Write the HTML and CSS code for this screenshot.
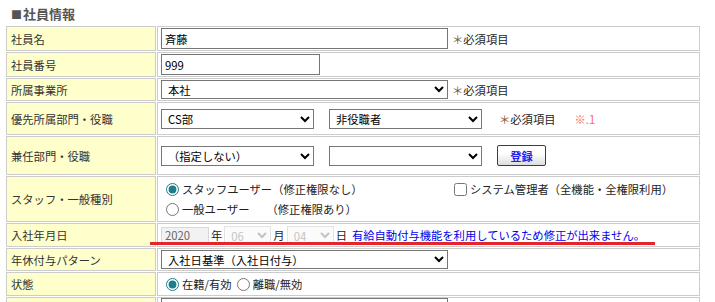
FILE: index.html
```html
<!DOCTYPE html>
<html lang="ja">
<head>
    <meta charset="UTF-8">
    <meta name="viewport" content="width=device-width, initial-scale=1.0">
    <title>社員情報</title>
    <link rel="stylesheet" href="styles.css">
</head>
<body>
    <h2 class="sec-title"><span class="mark">■</span>社員情報</h2>

    <table class="form-table">
        <colgroup>
            <col class="col-label">
            <col class="col-value">
        </colgroup>
        <tr class="r25">
            <th>社員名</th>
            <td>
                <div class="field">
                    <input type="text" class="txt w-long" value="斉藤">
                    <span class="req"><span class="star">＊</span>必須項目</span>
                </div>
            </td>
        </tr>
        <tr class="r25">
            <th>社員番号</th>
            <td>
                <div class="field">
                    <input type="text" class="txt w-mid" value="999">
                </div>
            </td>
        </tr>
        <tr class="r23">
            <th>所属事業所</th>
            <td>
                <div class="field">
                    <select class="sel w-long"><option>本社</option></select>
                    <span class="req"><span class="star">＊</span>必須項目</span>
                </div>
            </td>
        </tr>
        <tr class="r33">
            <th>優先所属部門・役職</th>
            <td>
                <div class="field">
                    <select class="sel sel-tall w-half"><option>CS部</option></select>
                    <select class="sel sel-tall w-half gap-l"><option>非役職者</option></select>
                    <span class="req req-far"><span class="star">＊</span>必須項目</span>
                    <span class="note">※.1</span>
                </div>
            </td>
        </tr>
        <tr class="r39">
            <th>兼任部門・役職</th>
            <td>
                <div class="field">
                    <select class="sel sel-tall w-half"><option>（指定しない）</option></select>
                    <select class="sel sel-tall w-half gap-l"><option></option></select>
                    <button class="btn-reg">登録</button>
                </div>
            </td>
        </tr>
        <tr class="r46">
            <th>スタッフ・一般種別</th>
            <td>
                <div class="opt-line">
                    <label class="opt-first"><input type="radio" name="kind" checked>スタッフユーザー（修正権限なし）</label>
                    <label><input type="checkbox">システム管理者（全機能・全権限利用）</label>
                </div>
                <div class="opt-line">
                    <label><input type="radio" name="kind">一般ユーザー　　（修正権限あり）</label>
                </div>
            </td>
        </tr>
        <tr class="r24">
            <th>入社年月日</th>
            <td>
                <div class="field">
                    <input type="text" class="txt date-y" value="2020" disabled>
                    <span class="unit">年</span>
                    <select class="sel date-md" disabled><option>06</option></select>
                    <span class="unit">月</span>
                    <select class="sel date-md" disabled><option>04</option></select>
                    <span class="unit">日</span>
                    <span class="info">有給自動付与機能を利用しているため修正が出来ません。</span>
                </div>
            </td>
        </tr>
        <tr class="r23">
            <th>年休付与パターン</th>
            <td>
                <div class="field">
                    <select class="sel w-long"><option>入社日基準（入社日付与）</option></select>
                </div>
            </td>
        </tr>
        <tr class="r24">
            <th>状態</th>
            <td>
                <div class="opt-line">
                    <label><input type="radio" name="state" checked>在籍/有効</label>
                    <label><input type="radio" name="state">離職/無効</label>
                </div>
            </td>
        </tr>
        <tr class="r25">
            <th></th>
            <td>
                <div class="field field-top">
                    <select class="sel w-long"><option></option></select>
                </div>
            </td>
        </tr>
    </table>

    <div class="mark-line"></div>
</body>
</html>
```

FILE: styles.css
```css
html, body {
    overflow: hidden;
}
body {
    margin: 0;
    position: relative;
    font-family: "Noto Sans CJK JP", sans-serif;
    font-size: 11.3px;
    color: #222;
    background-color: #fff;
}
.sec-title {
    margin: 0;
    padding-left: 11px;
    height: 25px;
    line-height: 27px;
    font-size: 13px;
    font-weight: bold;
    color: #555;
}
.sec-title .mark {
    font-size: 11px;
    margin-right: 1px;
}
.form-table {
    margin-left: 5px;
    width: 696px;
    table-layout: fixed;
    border-collapse: separate;
    border-spacing: 1px;
}
.col-label {
    width: 150px;
}
.form-table th,
.form-table td {
    box-sizing: border-box;
    border: 1px solid #ccc;
    vertical-align: middle;
    padding: 0 3px;
}
.form-table th {
    padding-left: 4px;
    text-align: left;
    font-weight: normal;
    color: #333;
    background-color: #ffffcc;
}
.r23 th, .r23 td { height: 23px; }
.r24 th, .r24 td { height: 24px; }
.r25 th, .r25 td { height: 25px; }
.r33 th, .r33 td { height: 33px; }
.r39 th, .r39 td { height: 39px; }
.r46 th, .r46 td { height: 46px; }

.field {
    display: flex;
    align-items: center;
}
.txt,
.sel {
    box-sizing: border-box;
    margin: 0;
    font-family: inherit;
    font-size: 11.3px;
    color: #000;
    background-color: #fff;
    border: 1px solid #767676;
    border-radius: 0;
}
.txt {
    height: 21px;
    padding: 0 3px;
}
.sel {
    height: 19px;
    padding: 0 0 0 2px;
}
.sel-tall {
    height: 20px;
}
.w-long {
    width: 287px;
}
.w-mid {
    width: 159px;
}
.w-half {
    width: 153px;
}
.gap-l {
    margin-left: 15px;
}
.req {
    margin-left: 4px;
    color: #222;
}
.req .star {
    color: #753;
}
.req-far {
    margin-left: 17px;
}
.note {
    margin-left: 19px;
    color: #f66;
}
.btn-reg {
    box-sizing: border-box;
    margin-left: 15px;
    width: 49px;
    height: 21px;
    padding: 0;
    font-family: inherit;
    font-size: 11.3px;
    font-weight: bold;
    color: #2222ee;
    border: 1px solid #2a2ad0;
    border-radius: 2px;
    background: linear-gradient(#fff, #fff 40%, #ddd);
}

.opt-line {
    display: flex;
    align-items: center;
    height: 20px;
}
.opt-line label {
    display: flex;
    align-items: center;
}
.opt-first {
    width: 289px;
}
.opt-line input {
    margin: 0 3px 0 5px;
    width: 13px;
    height: 13px;
    accent-color: #1d7d88;
}
.opt-line input[type="checkbox"] {
    margin: 0 3px 0 4px;
}

.date-y {
    width: 48px;
    height: 17px;
    padding: 0 3px;
}
.date-md {
    width: 47px;
    height: 18px;
}
.txt:disabled {
    color: #666;
    background-color: #f2f2f2;
    border-color: #d8d8d8;
}
.sel:disabled {
    color: #aaa;
    background-color: #fafafa;
    border-color: #d8d8d8;
}
.unit {
    margin: 0 2px;
}
.info {
    margin-left: 3px;
    color: #0000ee;
}
.field-top {
    align-items: flex-start;
    height: 100%;
}

.mark-line {
    position: absolute;
    left: 150px;
    top: 242px;
    width: 505px;
    height: 3px;
    background-color: #e3262b;
}
```
